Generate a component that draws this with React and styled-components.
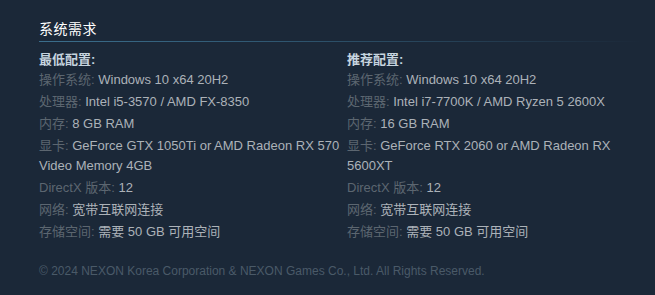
import React from 'react';
import styled, { createGlobalStyle } from 'styled-components';

const GlobalStyle = createGlobalStyle`
  html, body {
    margin: 0;
    padding: 0;
    background: #1b2838;
  }
  body {
    font-family: "Liberation Sans", Arial, "Noto Sans CJK SC", sans-serif;
  }
`;

const Page = styled.div`
  width: 655px;
  height: 295px;
  box-sizing: border-box;
  padding: 20px 12px 0 39px;
  background: #1b2838;
  overflow: hidden;
`;

const Section = styled.div`
  width: 604px;
`;

const Heading = styled.h2`
  margin: 0;
  padding-bottom: 3px;
  font-size: 14px;
  line-height: 18px;
  font-weight: normal;
  color: #ffffff;
  letter-spacing: 0.5px;
`;

const Rule = styled.div`
  height: 1px;
  background: linear-gradient(to right, #3b6e8c 0%, #2f5670 40%, #1b2838 100%);
  margin-bottom: 8px;
`;

const Columns = styled.div`
  display: grid;
  grid-template-columns: 303px 296px;
  column-gap: 5px;
`;

const Column = styled.div`
  font-size: 13px;
  line-height: 20px;
  color: #acb2b8;
`;

const ColumnTitle = styled.div`
  color: #c6d4df;
  font-weight: bold;
  height: 20px;
`;

const SpecList = styled.ul`
  list-style: none;
  margin: 0;
  padding: 0;
  max-width: 303px;
`;

const Spec = styled.li`
  margin-bottom: 2px;
`;

const Label = styled.span`
  color: #5c6670;
`;

const Footer = styled.div`
  margin-top: 19px;
  font-size: 12px;
  line-height: 16px;
  color: #4a5a68;
`;

const minimum = [
  ['操作系统:', 'Windows 10 x64 20H2'],
  ['处理器:', 'Intel i5-3570 / AMD FX-8350'],
  ['内存:', '8 GB RAM'],
  ['显卡:', 'GeForce GTX 1050Ti or AMD Radeon RX 570 Video Memory 4GB'],
  ['DirectX 版本:', '12'],
  ['网络:', '宽带互联网连接'],
  ['存储空间:', '需要 50 GB 可用空间'],
];

const recommended = [
  ['操作系统:', 'Windows 10 x64 20H2'],
  ['处理器:', 'Intel i7-7700K / AMD Ryzen 5 2600X'],
  ['内存:', '16 GB RAM'],
  ['显卡:', 'GeForce RTX 2060 or AMD Radeon RX 5600XT'],
  ['DirectX 版本:', '12'],
  ['网络:', '宽带互联网连接'],
  ['存储空间:', '需要 50 GB 可用空间'],
];

const SpecColumn = ({ title, specs }) => (
  <Column>
    <ColumnTitle>{title}</ColumnTitle>
    <SpecList>
      {specs.map(([label, value]) => (
        <Spec key={label}>
          <Label>{label}</Label> {value}
        </Spec>
      ))}
    </SpecList>
  </Column>
);

const App = () => (
  <>
    <GlobalStyle />
    <Page>
      <Section>
        <Heading>系统需求</Heading>
        <Rule />
        <Columns>
          <SpecColumn title="最低配置:" specs={minimum} />
          <SpecColumn title="推荐配置:" specs={recommended} />
        </Columns>
      </Section>
      <Footer>© 2024 NEXON Korea Corporation &amp; NEXON Games Co., Ltd. All Rights Reserved.</Footer>
    </Page>
  </>
);

export default App;
